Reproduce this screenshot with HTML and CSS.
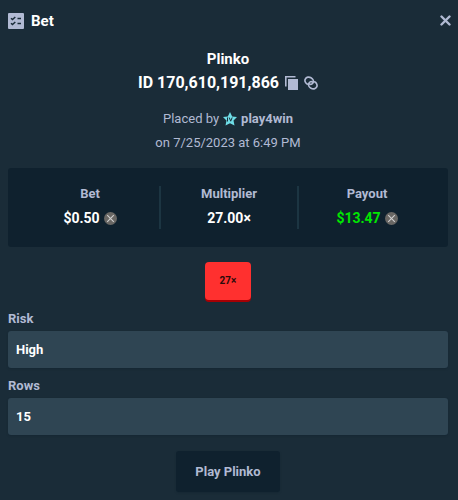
FILE: index.html
```html
<!DOCTYPE html>
<html lang="en">
<head>
  <meta charset="UTF-8" />
  <meta name="viewport" content="width=device-width, initial-scale=1.0"/>
  <title>Bet</title>
  <link rel="stylesheet" href="styles.css">
</head>
<body>

  <header class="header">
    <svg class="icon-bet" viewBox="0 0 16 16">
      <rect width="16" height="16" rx="1" fill="#b1bad3"/>
      <path d="M3 5.2l1.5 1.3L7.3 4M3 10.2l1.5 1.3L7.3 9" fill="none" stroke="#1a2c38" stroke-width="1.5"/>
      <path d="M9.5 5.5H13M9.5 10.5H13" stroke="#1a2c38" stroke-width="1.5"/>
    </svg>
    <h1>Bet</h1>
    <button class="icon-button close" aria-label="Close">
      <svg width="11" height="11" viewBox="0 0 11 11"><path d="M1.5 1.5l8 8M9.5 1.5l-8 8" stroke="#b1bad3" stroke-width="2.4" stroke-linecap="round"/></svg>
    </button>
  </header>

  <main class="content">
    <div class="title">
      <h2>Plinko</h2>
      <div class="bet-id">
        <span>ID 170,610,191,866</span>
        <button class="icon-button" aria-label="Copy ID">
          <svg width="13" height="14" viewBox="0 0 13 14"><path d="M3 3h10v11H3zM0 0h10.5v1.6H1.6V10.500H0z" fill="#b1bad3"/></svg>
        </button>
        <button class="icon-button" aria-label="Copy link">
          <svg width="14" height="14" viewBox="0 0 14 14">
            <g fill="none" stroke="#b1bad3" stroke-width="1.7" stroke-linecap="round">
              <path d="M3.400 8.200C1.500 7.200.4 5 1.300 3.200C2.400 .9 5 .6 7 1.700C9 2.800 10 5 9 6.900C8.300 8.300 6.700 8.700 5.500 8"/>
              <path d="M10.600 5.800C12.500 6.800 13.600 9 12.700 10.800C11.600 13.100 9 13.400 7 12.300C5 11.200 4 9 5 7.100C5.700 5.700 7.300 5.300 8.500 6"/>
            </g>
          </svg>
        </button>
      </div>
    </div>

    <div class="placed">
      <div class="placed-by">
        <span>Placed by</span>
        <svg width="14" height="14" viewBox="0 0 14 14">
          <path d="M7 0l2.200 4.400 4.800.6-3.500 3.500L11.500 13.500 7 11.300l-4.500 2.200 1-5L0 5l4.800-.6z" fill="#6fdde7"/>
          <path d="M4.500 5.500v4M6.200 5.500l1.500 3.700 1.500-3.700" fill="none" stroke="#1a2c38" stroke-width="1"/>
        </svg>
        <b>play4win</b>
      </div>
      <div>on 7/25/2023 at 6:49 PM</div>
    </div>

    <div class="stats">
      <div class="stat">
        <span class="stat-label">Bet</span>
        <span class="stat-value">$0.50
          <svg width="13" height="13" viewBox="0 0 13 13"><circle cx="6.5" cy="6.5" r="6.5" fill="#696764"/><path d="M3.2 3.2l6.6 6.6M9.8 3.2L3.2 9.8" stroke="#d0d0d0" stroke-width="1.1"/></svg>
        </span>
      </div>
      <div class="stat">
        <span class="stat-label">Multiplier</span>
        <span class="stat-value">27.00×</span>
      </div>
      <div class="stat">
        <span class="stat-label">Payout</span>
        <span class="stat-value win">$13.47
          <svg width="13" height="13" viewBox="0 0 13 13"><circle cx="6.5" cy="6.5" r="6.5" fill="#696764"/><path d="M3.2 3.2l6.6 6.6M9.8 3.2L3.2 9.8" stroke="#d0d0d0" stroke-width="1.1"/></svg>
        </span>
      </div>
    </div>

    <div class="result">27×</div>

    <div class="field">
      <label for="risk">Risk</label>
      <input type="text" id="risk" value="High" readonly />
    </div>
    <div class="field">
      <label for="rows">Rows</label>
      <input type="text" id="rows" value="15" readonly />
    </div>

    <button class="play">Play Plinko</button>
  </main>

</body>
</html>
```

FILE: styles.css
```css
body {
  margin: 0;
  padding: 0 10px 8px 8px;
  background: #1a2c38;
  color: #b1bad3;
  font-family: Roboto, "Liberation Sans", sans-serif;
  font-size: 13px;
  line-height: 24px;
}
h1, h2 {
  margin: 0;
  font-size: 15px;
  line-height: 24px;
  color: #fff;
}
svg {
  display: block;
  flex-shrink: 0;
}
.icon-button {
  padding: 0;
  background: none;
  border: none;
  cursor: pointer;
}
.header {
  display: flex;
  align-items: center;
  gap: 7px;
  height: 41px;
}
.icon-bet {
  width: 16px;
  height: 16px;
}
.close {
  margin-left: auto;
  margin-right: -3px;
}
.content {
  display: flex;
  flex-direction: column;
  align-items: center;
  padding-top: 6px;
}
.title {
  text-align: center;
}
.bet-id {
  display: flex;
  align-items: center;
  gap: 6px;
  font-size: 16px;
  font-weight: bold;
  color: #fff;
}
.placed {
  margin-top: 12px;
  text-align: center;
}
.placed-by {
  display: flex;
  align-items: center;
  justify-content: center;
  gap: 4px;
}
.stats {
  display: grid;
  grid-template-columns: 1fr 1fr 1fr;
  box-sizing: border-box;
  width: 100%;
  margin-top: 13px;
  padding: 18px 13px;
  background: #0f212e;
  border-radius: 3px;
}
.stat {
  display: flex;
  flex-direction: column;
  align-items: center;
  height: 43px;
  line-height: 16px;
  gap: 8px;
  font-weight: bold;
}
.stat + .stat {
  border-left: 2px solid #1c3542;
}
.stat-value {
  display: flex;
  align-items: center;
  gap: 4px;
  color: #fff;
  font-size: 14px;
}
.stat-value.win {
  color: #00e701;
}
.result {
  width: 46px;
  margin: 15px 0 7px;
  border-radius: 4px;
  background: #ff302f;
  box-shadow: 0 2px 0 #a60004;
  color: #2b0b0b;
  font-size: 10px;
  font-weight: bold;
  line-height: 38px;
  text-align: center;
}
.field {
  width: 100%;
  margin-bottom: 6px;
}
.field label {
  display: block;
  font-weight: bold;
}
.field input {
  display: block;
  box-sizing: border-box;
  width: 100%;
  height: 37px;
  padding: 0 8px;
  background: #2f4553;
  border: none;
  border-radius: 3px;
  box-shadow: 0 1px 2px #0f212e66;
  color: #fff;
  font: inherit;
  font-weight: bold;
}
.play {
  margin-top: 10px;
  padding: 0 19px;
  background: #0f212e;
  border: none;
  border-radius: 3px;
  box-shadow: 0 1px 2px #0f212e66;
  color: #b1bad3;
  font: inherit;
  font-weight: bold;
  line-height: 41px;
  cursor: pointer;
}
```
